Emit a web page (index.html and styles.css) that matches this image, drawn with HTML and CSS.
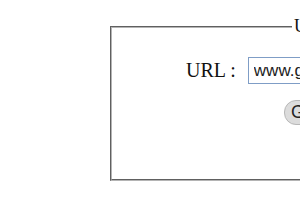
FILE: index.html
```html
<!doctype html>
<html>

<head>
  <meta charset='utf-8'>
  <title>URL Shortener</title>
  <link rel="stylesheet" href="styles.css">
</head>

<body>
  <fieldset class='box'>
    <legend>URL Shortener</legend>
    <div class='row'>
      <label for='url'>URL :</label>
      <input id='url' type='text' value='www.google.com'>
    </div>
    <div class='actions'>
      <button class='go'>Go</button>
    </div>
  </fieldset>
</body>

</html>
```

FILE: styles.css
```css
* {
  margin: 0;
  padding: 0;
}
body {
  background: #fff;
  font-family: "Liberation Serif", serif;
  color: #111;
}
.box {
  margin: 16px 0 0 110px;
  width: 420px;
  padding: 20px 20px 54px 74px;
  border: 2px groove #b4b4b4;
}
.box legend {
  margin-left: 106px;
  padding: 0 2px;
  font-size: 18px;
}
.row {
  display: flex;
  align-items: center;
  gap: 12px;
  height: 27px;
}
.row label {
  font-size: 20px;
}
.row input {
  width: 220px;
  height: 27px;
  box-sizing: border-box;
  padding: 0 5px;
  border: 1px solid #7f9dc6;
  font-family: "Liberation Sans", Arial, sans-serif;
  font-size: 17px;
  color: #222;
}
.actions {
  margin-top: 16px;
  padding-left: 98px;
}
.go {
  height: 25px;
  padding: 0 6px;
  border: 1px solid #b8b8b8;
  border-radius: 12px;
  background: #dcdcdc;
  font-family: "Liberation Sans", Arial, sans-serif;
  font-size: 18px;
  color: #222;
}
```
